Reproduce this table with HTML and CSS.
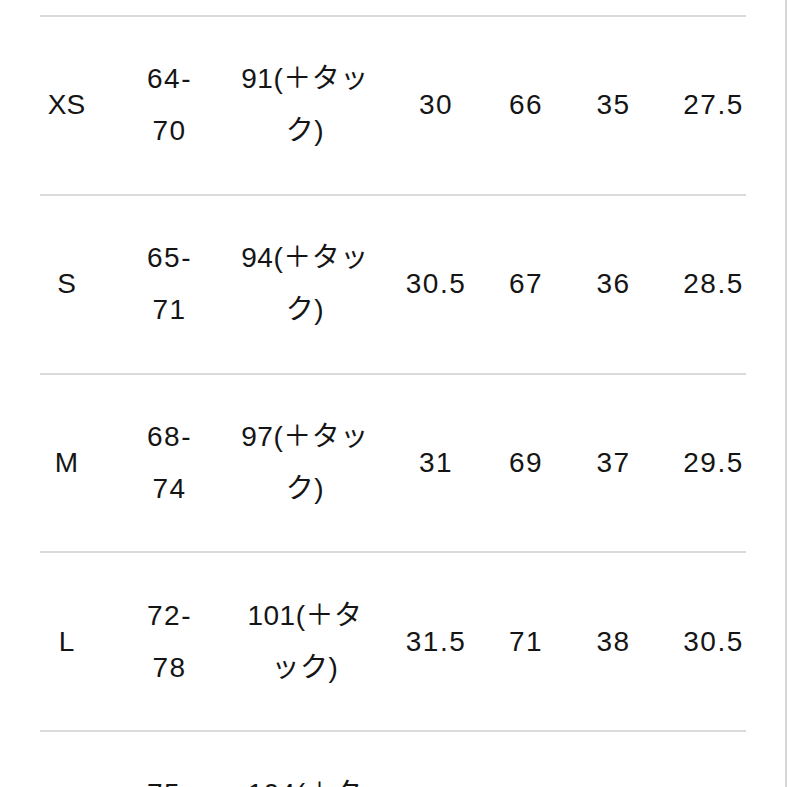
FILE: index.html
```html
<!DOCTYPE html>
<html lang="ja">
<head>
<meta charset="utf-8">
<title>サイズ表</title>
<link rel="stylesheet" href="styles.css">
</head>
<body>
<div class="page">
  <div class="table">
    <div class="row">
      <div class="cell c1">XS</div>
      <div class="cell c2">64-70</div>
      <div class="cell c3">91(＋タック)</div>
      <div class="cell c4">30</div>
      <div class="cell c5">66</div>
      <div class="cell c6">35</div>
      <div class="cell c7">27.5</div>
    </div>
    <div class="row">
      <div class="cell c1">S</div>
      <div class="cell c2">65-71</div>
      <div class="cell c3">94(＋タック)</div>
      <div class="cell c4">30.5</div>
      <div class="cell c5">67</div>
      <div class="cell c6">36</div>
      <div class="cell c7">28.5</div>
    </div>
    <div class="row">
      <div class="cell c1">M</div>
      <div class="cell c2">68-74</div>
      <div class="cell c3">97(＋タック)</div>
      <div class="cell c4">31</div>
      <div class="cell c5">69</div>
      <div class="cell c6">37</div>
      <div class="cell c7">29.5</div>
    </div>
    <div class="row">
      <div class="cell c1">L</div>
      <div class="cell c2">72-78</div>
      <div class="cell c3">101(＋タック)</div>
      <div class="cell c4">31.5</div>
      <div class="cell c5">71</div>
      <div class="cell c6">38</div>
      <div class="cell c7">30.5</div>
    </div>
    <div class="row">
      <div class="cell c1">XL</div>
      <div class="cell c2">75-81</div>
      <div class="cell c3">104(＋タック)</div>
      <div class="cell c4">32</div>
      <div class="cell c5">73</div>
      <div class="cell c6">39</div>
      <div class="cell c7">31.5</div>
    </div>
  </div>
</div>
</body>
</html>
```
FILE: styles.css
```css
html, body {
  margin: 0;
  padding: 0;
  height: 100%;
  overflow: hidden;
  background: #ffffff;
}

.page {
  box-sizing: border-box;
  width: 787px;
  height: 787px;
  padding-top: 15px;
  border-right: 2px solid #d8d8d8;
  overflow: hidden;
  font-family: "Liberation Sans", "Noto Sans CJK JP", sans-serif;
  font-size: 28px;
  color: #151515;
}

.table {
  width: 706px;
  margin-left: 40px;
}

.row {
  box-sizing: border-box;
  height: 178.75px;
  border-top: 2px solid #dadada;
  display: flex;
  align-items: center;
}

.cell {
  flex: none;
  text-align: center;
  line-height: 52px;
  letter-spacing: 1.5px;
}

.c1 { width: 50px; margin-left: 1.5px; letter-spacing: 0; }
.c2 { width: 60px; margin-left: 48px; }
.c3 { width: 134px; margin-left: 38.5px; letter-spacing: 0.5px; }
.c4 { width: 64px; margin-left: 32px; }
.c5 { width: 64px; margin-left: 26px; }
.c6 { width: 64px; margin-left: 23.5px; }
.c7 { width: 64px; margin-left: 36px; }
```
